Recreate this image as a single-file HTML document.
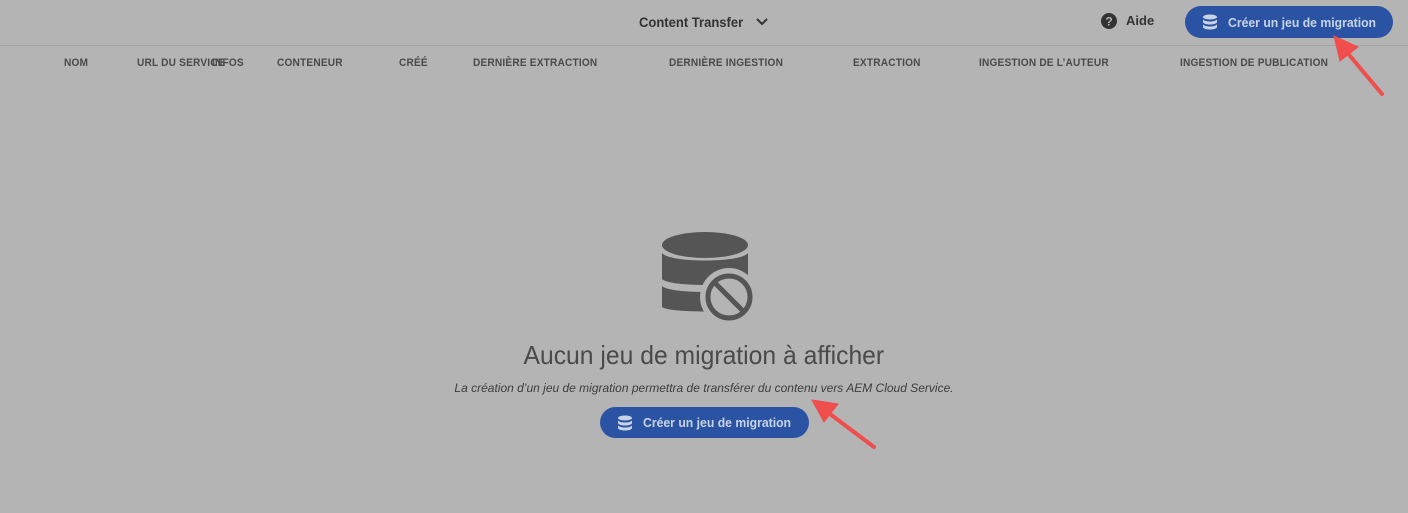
<!DOCTYPE html>
<html><head><meta charset="utf-8"><style>
*{margin:0;padding:0;box-sizing:border-box}
body{width:1408px;height:513px;background:#b4b4b4;font-family:"Liberation Sans",sans-serif;position:relative;overflow:hidden;color:#3a3a3a}
.abs{position:absolute;white-space:nowrap}
.hdr{position:absolute;top:57px;font-size:11px;font-weight:bold;color:#4a4a4a;letter-spacing:0.2px;transform:scaleX(0.92);transform-origin:left}
.btn{position:absolute;background:#2a54a3;border-radius:17px;color:#c9d3e6;font-weight:bold;font-size:13px;display:flex;align-items:center}
.btn span{display:inline-block;transform:scaleX(0.94);transform-origin:left}
.line{position:absolute;left:0;top:45px;width:1408px;height:1px;background:#a3a3a3}
</style></head><body>
<div class="abs" style="left:639px;top:14px;font-size:14px;font-weight:bold;color:#333;transform:scaleX(0.93);transform-origin:left">Content Transfer</div>
<svg class="abs" style="left:756px;top:17px" width="12" height="10"><path d="M1 2 L6 7 L11 2" stroke="#333" stroke-width="2" fill="none"/></svg>
<svg class="abs" style="left:1101px;top:13px" width="16" height="16"><circle cx="8" cy="8" r="8" fill="#333"/><text x="8" y="12.5" font-size="12" font-weight="bold" fill="#b4b4b4" text-anchor="middle" font-family="Liberation Sans">?</text></svg>
<div class="abs" style="left:1126px;top:13px;font-size:13px;font-weight:bold;color:#333">Aide</div>
<div class="btn" style="left:1185px;top:6px;width:208px;height:32px;padding-left:17px">
<svg width="16" height="16" viewBox="0 0 16 16" style="margin-right:10px"><ellipse cx="8" cy="3" rx="7" ry="2.5" fill="#c9d3e6"/><path d="M1 5v3c0 1.4 3 2.5 7 2.5s7-1.1 7-2.5V5c0 1.4-3 2.5-7 2.5S1 6.4 1 5z" fill="#c9d3e6"/><path d="M1 10v3c0 1.4 3 2.5 7 2.5s7-1.1 7-2.5v-3c0 1.4-3 2.5-7 2.5S1 11.4 1 10z" fill="#c9d3e6"/></svg><span>Créer un jeu de migration</span></div>
<div class="line"></div>
<div class="hdr" style="left:64px">NOM</div>
<div class="hdr" style="left:137px">URL DU SERVICE</div>
<div class="hdr" style="left:212px">INFOS</div>
<div class="hdr" style="left:277px">CONTENEUR</div>
<div class="hdr" style="left:399px">CRÉÉ</div>
<div class="hdr" style="left:473px">DERNIÈRE EXTRACTION</div>
<div class="hdr" style="left:669px">DERNIÈRE INGESTION</div>
<div class="hdr" style="left:853px">EXTRACTION</div>
<div class="hdr" style="left:979px">INGESTION DE L’AUTEUR</div>
<div class="hdr" style="left:1180px">INGESTION DE PUBLICATION</div>
<svg class="abs" style="left:655px;top:225px" width="105" height="100">
<g fill="#555">
<ellipse cx="50" cy="20" rx="43" ry="13"/>
<path d="M7 28 C14 38 86 38 93 28 L93 54 C86 62 14 62 7 54Z"/>
<path d="M7 61 C14 69 86 69 93 61 L93 82 C86 88 14 88 7 82Z"/>
</g>
<circle cx="74" cy="72" r="29" fill="#b4b4b4"/>
<circle cx="74" cy="72" r="21" fill="none" stroke="#555" stroke-width="5"/>
<path d="M60 58 L88 86" stroke="#555" stroke-width="5"/>
</svg>
<div class="abs" style="left:0;width:1408px;text-align:center;top:340px;font-size:26px;font-weight:300;color:#4a4a4a"><span style="display:inline-block;transform:scaleX(0.95)">Aucun jeu de migration à afficher</span></div>
<div class="abs" style="left:0;width:1408px;text-align:center;top:381px;font-size:12px;font-style:italic;color:#3d3d3d">La création d’un jeu de migration permettra de transférer du contenu vers AEM Cloud Service.</div>
<div class="btn" style="left:600px;top:407px;width:209px;height:31px;padding-left:17px">
<svg width="16" height="16" viewBox="0 0 16 16" style="margin-right:10px"><ellipse cx="8" cy="3" rx="7" ry="2.5" fill="#c9d3e6"/><path d="M1 5v3c0 1.4 3 2.5 7 2.5s7-1.1 7-2.5V5c0 1.4-3 2.5-7 2.5S1 6.4 1 5z" fill="#c9d3e6"/><path d="M1 10v3c0 1.4 3 2.5 7 2.5s7-1.1 7-2.5v-3c0 1.4-3 2.5-7 2.5S1 11.4 1 10z" fill="#c9d3e6"/></svg><span>Créer un jeu de migration</span></div>
<svg class="abs" style="left:0;top:0" width="1408" height="513">
<g stroke="#f04d4d" stroke-width="4" fill="#f04d4d" stroke-linecap="round">
<line x1="1382" y1="94" x2="1345" y2="50"/>
<polygon points="1334,36 1358,47 1340,61" stroke-width="1"/>
<line x1="874" y1="447" x2="826" y2="411"/>
<polygon points="812,400 838,404 824,422" stroke-width="1"/>
</g></svg>
</body></html>
